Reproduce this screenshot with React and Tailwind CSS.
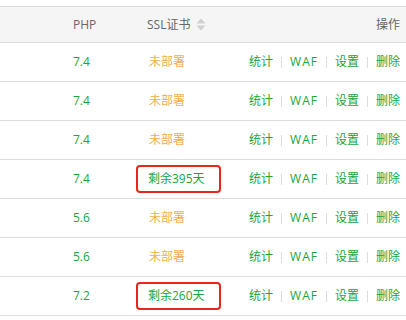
import React from "react";

const rows = [
  { php: "7.4", ssl: null },
  { php: "7.4", ssl: null },
  { php: "7.4", ssl: null },
  { php: "7.4", ssl: "剩余395天" },
  { php: "5.6", ssl: null },
  { php: "5.6", ssl: null },
  { php: "7.2", ssl: "剩余260天" },
];

function Sep() {
  return <span className="inline-block w-px h-[11px] bg-[#dddddd] mx-[8px]" />;
}

export default function App() {
  return (
    <div
      className="w-[406px] h-[320px] bg-white overflow-hidden pt-[6px] text-[12px]"
      style={{ fontFamily: '"Open Sans", "Noto Sans CJK SC", sans-serif' }}
    >
      <div className="flex items-center h-[37px] bg-[#f5f5f5] border-y border-[#dddddd] text-[#666666]">
        <div className="w-[73px]" />
        <div className="w-[74px]">PHP</div>
        <div className="flex-1 flex items-center">
          <span>SSL证书</span>
          <svg width="10" height="13" viewBox="0 0 10 13" className="ml-[6px]">
            <path d="M5 0.5 L9.5 5.5 L0.5 5.5 Z" fill="#cfcfcf" />
            <path d="M5 12.5 L9.5 7.5 L0.5 7.5 Z" fill="#cfcfcf" />
          </svg>
        </div>
        <div className="pr-[6px]">操作</div>
      </div>
      {rows.map((r, i) => (
        <div key={i} className="flex items-center h-[39px] border-b border-[#dddddd]">
          <div className="w-[73px]" />
          <div className="w-[74px] text-[#20a53a]">{r.php}</div>
          <div className="flex-1">
            {r.ssl ? (
              <span className="inline-flex items-center h-[28px] -ml-[11px] pl-[10px] pr-[14px] border-2 border-[#e8261f] rounded-[4px] text-[#20a53a]">
                {r.ssl}
              </span>
            ) : (
              <span className="text-[#f0ad4e] ml-[2px]">未部署</span>
            )}
          </div>
          <div className="flex items-center pr-[6px] text-[#20a53a]">
            <span>统计</span>
            <Sep />
            <span className="tracking-[1px]">WAF</span>
            <Sep />
            <span>设置</span>
            <Sep />
            <span>删除</span>
          </div>
        </div>
      ))}
    </div>
  );
}
